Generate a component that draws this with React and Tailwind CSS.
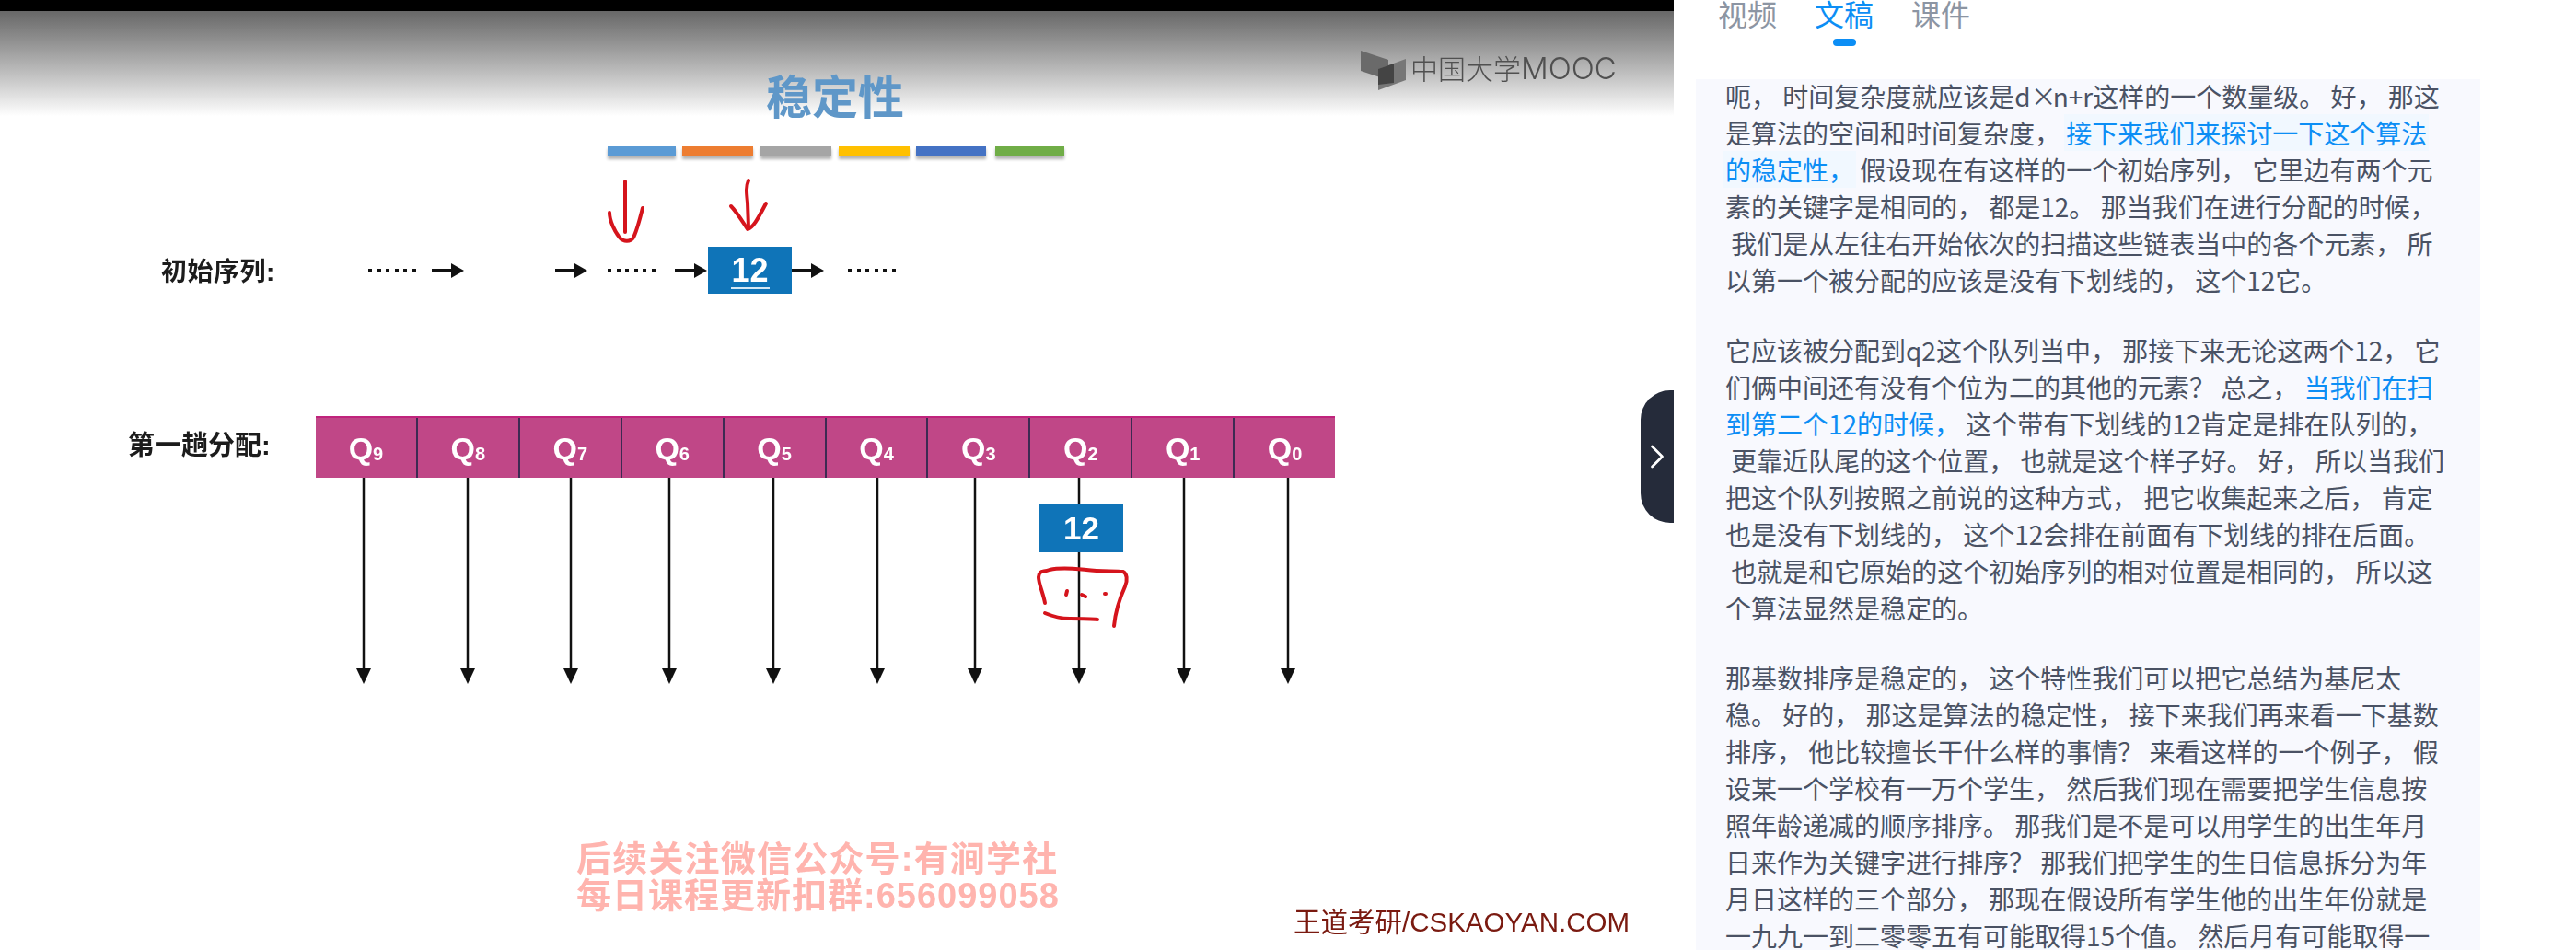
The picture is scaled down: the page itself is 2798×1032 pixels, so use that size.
import React from 'react';
import { ChevronRight } from 'lucide-react';

const sans = "[font-family:'Liberation_Sans','Noto_Sans_CJK_SC',sans-serif]";

const swatches = [
  ['w-[74px]', 'bg-[#5b9bd5]'],
  ['w-[77px] ml-[7px]', 'bg-[#ed7d31]'],
  ['w-[77px] ml-[8px]', 'bg-[#a5a5a5]'],
  ['w-[77px] ml-[8px]', 'bg-[#ffc000]'],
  ['w-[76px] ml-[7px]', 'bg-[#4472c4]'],
  ['w-[75px] ml-[10px]', 'bg-[#70ad47]'],
];

const queues = [9, 8, 7, 6, 5, 4, 3, 2, 1, 0];
const queueArrows = [395, 508, 620, 727, 840, 953, 1059, 1172, 1286, 1399];

const paragraphs = [
  [
    [['呃， 时间复杂度就应该是d'], ['×', 'times'], ['n+r这样的一个数量级。 好， 那这']],
    [['是算法的空间和时间复杂度， '], ['接下来我们来探讨一下这个算法', 'mark']],
    [['的稳定性，', 'mark'], [' 假设现在有这样的一个初始序列， 它里边有两个元']],
    [['素的关键字是相同的， 都是12。 那当我们在进行分配的时候，']],
    [[' 我们是从左往右开始依次的扫描这些链表当中的各个元素， 所']],
    [['以第一个被分配的应该是没有下划线的， 这个12它。']],
  ],
  [
    [['它应该被分配到q2这个队列当中， 那接下来无论这两个12， 它']],
    [['们俩中间还有没有个位为二的其他的元素？ 总之， '], ['当我们在扫', 'blue']],
    [['到第二个12的时候，', 'blue'], [' 这个带有下划线的12肯定是排在队列的，']],
    [[' 更靠近队尾的这个位置， 也就是这个样子好。 好， 所以当我们']],
    [['把这个队列按照之前说的这种方式， 把它收集起来之后， 肯定']],
    [['也是没有下划线的， 这个12会排在前面有下划线的排在后面。']],
    [[' 也就是和它原始的这个初始序列的相对位置是相同的， 所以这']],
    [['个算法显然是稳定的。']],
  ],
  [
    [['那基数排序是稳定的， 这个特性我们可以把它总结为基尼太']],
    [['稳。 好的， 那这是算法的稳定性， 接下来我们再来看一下基数']],
    [['排序， 他比较擅长干什么样的事情？ 来看这样的一个例子， 假']],
    [['设某一个学校有一万个学生， 然后我们现在需要把学生信息按']],
    [['照年龄递减的顺序排序。 那我们是不是可以用学生的出生年月']],
    [['日来作为关键字进行排序？ 那我们把学生的生日信息拆分为年']],
    [['月日这样的三个部分， 那现在假设所有学生他的出生年份就是']],
    [['一九九一到二零零五有可能取得15个值。 然后月有可能取得一']],
  ],
];

const Dots = () => (
  <span className="w-[52px] flex justify-between">
    {[0, 1, 2, 3, 4, 5].map((i) => (
      <span key={i} className="size-1 bg-[#111]" />
    ))}
  </span>
);

const SeqArrow = () => (
  <svg width="36" height="20" viewBox="0 0 36 20" className="shrink-0">
    <path d="M0 10H24" stroke="#111" strokeWidth="4" />
    <path d="M21 2L35 10L21 18Z" fill="#111" />
  </svg>
);

const Tab = ({ label, active }) => (
  <div className="w-16 flex flex-col items-center">
    <span className={`text-[32px] leading-8 ${active ? 'text-[#0c8ef5]' : 'text-[#8c95a3]'}`}>{label}</span>
    <span className={`mt-[12px] h-2 w-[25px] rounded-[4px] ${active ? 'bg-[#0c8ef5]' : ''}`} />
  </div>
);

const Slide = () => (
  <div className={`relative w-[1818px] h-[1032px] shrink-0 bg-white overflow-hidden ${sans}`}>
    <div className="h-3 bg-black" />
    <div className="h-[114px] bg-gradient-to-b from-[#686868] to-white" />

    <div className="absolute left-[832px] top-[79px] text-[50px] leading-[56px] font-bold text-[#5f97c8] blur-[0.6px]">稳定性</div>

    <div className="absolute left-[660px] top-[159px] flex blur-[0.4px]">
      {swatches.map(([w, c]) => (
        <span key={c} className={`h-[11px] ${w} ${c} shadow-[0_3px_3px_rgba(0,0,0,0.3)]`} />
      ))}
    </div>

    <div className="absolute left-[1478px] top-[54px] text-[#505050] blur-[0.5px]">
      <svg width="52" height="46" viewBox="0 0 52 46" className="absolute left-0 top-0">
        <path d="M0 1L30 11V33L0 23Z" fill="#6a6a6a" />
        <path d="M19 21L49 10V33L19 44Z" fill="#777" />
        <path d="M19 21L36 15V36L19 38Z" fill="#444" />
      </svg>
      <span className="absolute left-[54px] top-[-1px] text-[30px] leading-[40px] whitespace-nowrap [font-family:'Noto_Sans_CJK_SC',sans-serif] font-light">中国大学<span className="text-[33px] [font-family:'Inter',sans-serif]">MOOC</span></span>
    </div>

    <div className="absolute left-[175px] top-[276px] text-[28px] leading-10 tracking-[0.5px] font-bold text-[#1c1c1c] blur-[0.4px]">初始序列:</div>

    <div className="absolute left-[400px] top-[268px] h-[51px] flex items-center blur-[0.3px]">
      <Dots />
      <span className="ml-[17px]"><SeqArrow /></span>
      <span className="ml-[98px]"><SeqArrow /></span>
      <span className="ml-[21px]"><Dots /></span>
      <span className="ml-[21px]"><SeqArrow /></span>
      <div className="w-[91px] h-[51px] bg-[#0f74b8] flex flex-col items-center text-white font-bold">
        <span className="text-[36px] leading-[38px] mt-[7px]">12</span>
        <span className="h-0.5 w-[42px] bg-[#d5e8f5] mt-[-1px]" />
      </div>
      <SeqArrow />
      <span className="ml-[25px]"><Dots /></span>
    </div>

    <div className="absolute left-[139px] top-[464px] text-[29px] leading-10 font-bold text-[#1c1c1c] blur-[0.4px]">第一趟分配:</div>

    <div className="absolute left-[343px] top-[452px] w-[1107px] h-[67px] flex bg-[#c04787] border-t-2 border-[#c0237c] blur-[0.3px]">
      {queues.map((q) => (
        <div key={q} className="flex-1 flex items-center justify-center border-r-2 border-[#3d2a52] last:border-r-0 text-white font-bold">
          <span className="text-[34px] leading-8">Q</span>
          <span className="text-[20px] leading-4 mt-3">{q}</span>
        </div>
      ))}
    </div>

    <svg width="1818" height="1032" viewBox="0 0 1818 1032" className="absolute left-0 top-0 blur-[0.3px]" fill="none">
      {queueArrows.map((x) => (
        <g key={x}>
          <path d={`M${x} 519V730`} stroke="#111" strokeWidth="2.5" />
          <path d={`M${x - 8} 726H${x + 8}L${x} 743Z`} fill="#111" />
        </g>
      ))}
      <g stroke="#d5141c" strokeWidth="4" strokeLinecap="round" strokeLinejoin="round">
        <path d="M679 197V252" />
        <path d="M662 231C662 240 668 252 673 258C677 263 685 263 688 258C692 250 695 238 698 226" />
        <path d="M813 196C810 203 811 210 812 220L813 247" />
        <path d="M794 224C800 230 806 240 812 249C818 247 822 240 832 221" />
      </g>
    </svg>

    <div className="absolute left-[1129px] top-[548px] w-[91px] h-[52px] bg-[#0f74b8] flex items-center justify-center text-[35px] font-bold text-white blur-[0.3px]">12</div>

    <svg width="110" height="80" viewBox="0 0 110 80" className="absolute left-[1120px] top-[610px]" fill="none">
      <g stroke="#d5141c" strokeWidth="4" strokeLinecap="round" strokeLinejoin="round">
        <path d="M15 45C13 34 8 24 8 17C9 9 12 12 20 9C34 6 48 8 60 9C75 11 90 10 100 11C104 13 105 20 102 27C97 38 92 50 90 70" />
        <path d="M15 56C22 59 30 62 42 62C55 62 65 62 72 63" />
        <path d="M39 32L38 36" />
        <path d="M55 36L59 38" />
        <path d="M80 35H81" />
      </g>
    </svg>

    <div className="absolute left-[626px] top-[913px] text-[38px] leading-10 font-bold text-[#ffb4ae] whitespace-nowrap blur-[0.6px]">
      <div className="tracking-[1.2px]">后续关注微信公众号:有涧学社</div>
      <div className="tracking-[1px]">每日课程更新扣群:656099058</div>
    </div>

    <div className="absolute left-[1405px] top-[986px] text-[29.5px] leading-8 text-[#7a1a10] whitespace-nowrap blur-[0.3px]">王道考研/CSKAOYAN.COM</div>

    <div className="absolute right-0 top-[424px] w-9 h-36 bg-[#252b3a] rounded-l-[32px] flex items-center justify-center">
      <ChevronRight size={44} strokeWidth={1.5} className="text-white shrink-0" />
    </div>
  </div>
);

const Transcript = () => (
  <div className="ml-[24px] w-[852px] flex-1 bg-[#f8f9fe] pl-[32px] overflow-hidden">
    <div className="-mt-[2px]">
      {paragraphs.map((lines, p) => (
        <div key={p} className="mb-9">
          {lines.map((parts, l) => (
            <div key={l} className="h-10 text-[28px] leading-10 text-[#4a5264] whitespace-pre">
              {parts.map(([text, kind], i) => (
                <span
                  key={i}
                  className={
                    kind === 'mark'
                      ? 'text-[#0c8ef5] bg-[#f1f8ff] inline-block h-10 px-[2px] mx-[-2px]'
                      : kind === 'blue'
                        ? 'text-[#0c8ef5]'
                        : kind === 'times'
                          ? 'tracking-[-4px]'
                          : ''
                  }
                >
                  {text}
                </span>
              ))}
            </div>
          ))}
        </div>
      ))}
    </div>
  </div>
);

export default function App() {
  return (
    <div className="w-[2798px] h-[1032px] flex bg-white overflow-hidden [font-family:'Noto_Sans_CJK_SC',sans-serif]">
      <Slide />
      <div className="flex-1 flex flex-col min-w-0 h-full">
        <div className="h-[88px] shrink-0 flex gap-[41px] pl-[48px] -mt-[2px]">
          <Tab label="视频" />
          <Tab label="文稿" active />
          <Tab label="课件" />
        </div>
        <Transcript />
      </div>
    </div>
  );
}
